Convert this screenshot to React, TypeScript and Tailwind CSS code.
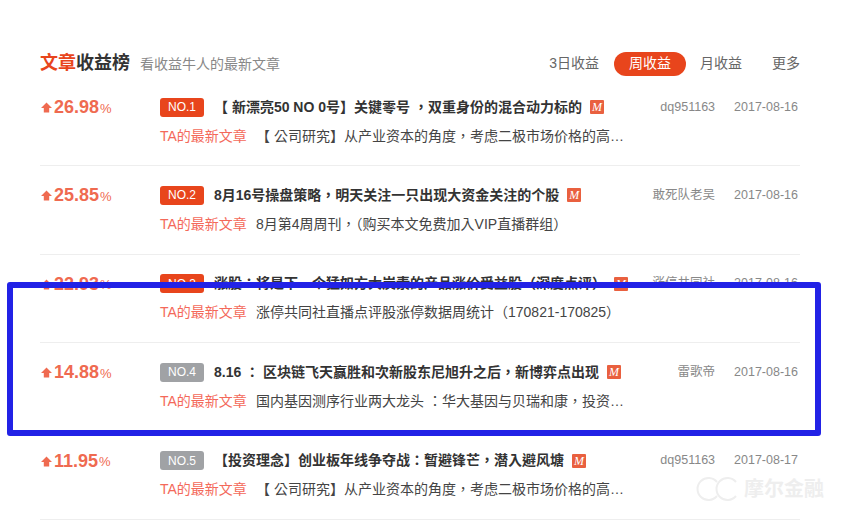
const rows = [
  {
    pct: "26.98",
    no: "NO.1",
    title: "【 新漂亮50 NO 0号】关键零号 ，双重身份的混合动力标的",
    author: "dq951163",
    date: "2017-08-16",
    sub: "【 公司研究】从产业资本的角度，考虑二极市场价格的高低及未来的成长空间",
    top: true,
  },
  {
    pct: "25.85",
    no: "NO.2",
    title: "8月16号操盘策略，明天关注一只出现大资金关注的个股",
    author: "敢死队老吴",
    date: "2017-08-16",
    sub: "8月第4周周刊，（购买本文免费加入VIP直播群组）",
    top: true,
  },
  {
    pct: "22.93",
    no: "NO.3",
    title: "涨股：将是下一个猛如方大炭素的产品涨价受益股（深度点评）",
    author: "涨停共同社",
    date: "2017-08-16",
    sub: "涨停共同社直播点评股涨停数据周统计（170821-170825）",
    top: true,
  },
  {
    pct: "14.88",
    no: "NO.4",
    title: "8.16 ： 区块链飞天赢胜和次新股东尼旭升之后，新博弈点出现",
    author: "雷歌帝",
    date: "2017-08-16",
    sub: "国内基因测序行业两大龙头 ：华大基因与贝瑞和康，投资价值分析报告全文",
    top: false,
  },
  {
    pct: "11.95",
    no: "NO.5",
    title: "【投资理念】创业板年线争夺战：暂避锋芒，潜入避风塘",
    author: "dq951163",
    date: "2017-08-17",
    sub: "【 公司研究】从产业资本的角度，考虑二极市场价格的高低及未来的成长空间",
    top: false,
  },
];

function UpArrow() {
  return (
    <svg width="11" height="11" viewBox="0 0 11 11" className="ml-[1px] mr-[2px] mt-[1px] shrink-0">
      <path d="M5.5 0.5 L11 6 H8.2 V10.5 H2.8 V6 H0 Z" fill="#ef6a50" />
    </svg>
  );
}

function MBadge() {
  return (
    <span className="ml-[8px] flex h-[14px] w-[14px] shrink-0 items-center justify-center rounded-[1px] bg-[#e9603f] font-['Liberation_Serif',serif] text-[12px] italic leading-none text-white">
      M
    </span>
  );
}

export default function App() {
  return (
    <div className="relative h-[522px] w-[843px] overflow-hidden bg-white pl-[40px] pr-[43px] pt-[50px] font-['Liberation_Sans','Noto_Sans_CJK_SC',sans-serif]">
      <div className="flex h-[27px] items-center">
        <h2 className="text-[18px] font-bold leading-[27px] text-[#333]">
          <span className="text-[#e8451c]">文章</span>收益榜
        </h2>
        <span className="ml-[10px] mt-[2px] text-[14px] text-[#888]">看收益牛人的最新文章</span>
        <div className="ml-auto flex items-center text-[14px] text-[#666]">
          <span className="mr-[15px]">3日收益</span>
          <span className="flex h-[24px] w-[72px] items-center justify-center rounded-full bg-[#e8451c] text-white">
            周收益
          </span>
          <span className="ml-[14px]">月收益</span>
          <span className="ml-[30px]">更多</span>
        </div>
      </div>

      <div className="mt-[1px]">
        {rows.map((r) => (
          <div key={r.no} className="flex h-[88.4px] border-b border-[#eeeeee] pt-[15px]">
            <div className="flex h-[28px] w-[120px] shrink-0 items-center text-[#ef6a50]">
              <UpArrow />
              <span className="text-[18px] font-bold leading-none">{r.pct}</span>
              <span className="ml-[1px] mt-[2px] text-[13px] leading-none">%</span>
            </div>
            <div className="min-w-0 flex-1">
              <div className="flex h-[28px] items-center">
                <span
                  className={`flex h-[19px] w-[44px] shrink-0 items-center justify-center rounded-[3px] text-[12px] text-white ${
                    r.top ? "bg-[#e8451c]" : "bg-[#a0a2a5]"
                  }`}
                >
                  {r.no}
                </span>
                <span className="ml-[10px] whitespace-nowrap font-['Liberation_Sans','Noto_Sans_CJK_TC',sans-serif] text-[14px] font-bold text-[#333]">
                  {r.title}
                </span>
                <MBadge />
                <span className="ml-auto whitespace-nowrap text-[12.5px] text-[#888]">{r.author}</span>
                <span className="ml-[19px] mr-[2px] text-[12.5px] text-[#888]">{r.date}</span>
              </div>
              <div className="mt-[1px] flex h-[28px] items-center text-[14px]">
                <span className="w-[96px] shrink-0 text-[#f4695a]">TA的最新文章</span>
                <span className="w-[369px] truncate font-['Liberation_Sans','Noto_Sans_CJK_TC',sans-serif] text-[#444]">
                  {r.sub}
                </span>
              </div>
            </div>
          </div>
        ))}
      </div>

      {/* blue highlight drawn over the list */}
      <div className="absolute left-[7px] top-[282px] h-[154px] w-[814px] rounded-[3px] border-[6px] border-[#2222e6]" />

      {/* watermark */}
      <div className="absolute left-[693px] top-[476px] flex items-center">
        <svg width="46" height="26" viewBox="0 0 46 26" fill="none" stroke="#eeeeee" strokeWidth="2">
          <path d="M24 6 A11 11 0 1 0 24 20" />
          <path d="M43 6 A11 11 0 1 0 43 20" />
        </svg>
        <span className="ml-[5px] text-[20px] font-bold leading-none text-[#eeeeee]">摩尔金融</span>
      </div>
    </div>
  );
}
